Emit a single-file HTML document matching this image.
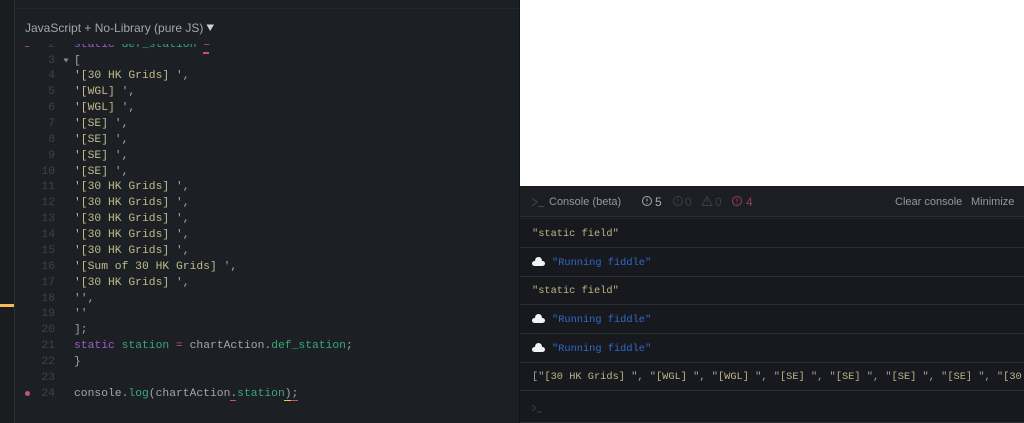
<!DOCTYPE html>
<html><head><meta charset="utf-8"><style>
html,body{margin:0;padding:0;background:#1c1f24}
body{width:1024px;height:423px;position:relative;overflow:hidden;font-family:"Liberation Sans",sans-serif}
div,svg{position:absolute}
.l{left:0;width:55px;height:16px;line-height:16px;text-align:right;color:#3f4348}
.n,.c{font-family:"Liberation Mono",monospace;font-size:11.33px;white-space:pre;filter:blur(.3px)}
.c{left:74px;height:16px;line-height:16px;color:#a3a5a8}
.s{color:#c4bb88}.k{color:#9a5fc4}.g{color:#39a777}.p{color:#c2527a}.w{color:#a3a5a8}
.h{left:520px;width:504px;height:1px;background:#2a2d33}
.m{left:532px;height:16px;line-height:16px;font-family:"Liberation Mono",monospace;font-size:10.33px;white-space:pre;color:#bdb583;filter:blur(.3px)}
.b{color:#2f6ac8}
.t{font-size:11px;color:#95989c;height:14px;line-height:14px;white-space:pre;filter:blur(.25px)}
.cl{left:532px;width:13px;height:5px;background:#f2f3f4;border-radius:3px}
.cl:before{content:"";position:absolute;left:3px;top:-4px;width:7px;height:7px;background:#f2f3f4;border-radius:50%}
</style></head><body>
<div style="left:0;top:0;width:14px;height:423px;background:#1a1c20"></div>
<div style="left:14px;top:0;width:1px;height:423px;background:#2a2d32"></div>
<div style="left:0;top:304px;width:14px;height:3px;background:#f0bd5d"></div>
<div style="left:15px;top:8px;width:505px;height:1px;background:#25282d"></div>
<div class="t" style="left:25px;top:21px;font-size:12px;color:#a4a6a9">JavaScript + No-Library (pure JS)</div>
<svg style="left:206px;top:24px" width="9" height="8"><path d="M0.5 0.5H8L4.2 7Z" fill="#d0d1d3"/></svg>

<div style="left:0;top:44px;width:520px;height:6px;overflow:hidden">
<div class="l n" style="top:-7px">2</div>
<div class="c" style="top:-7px"><span class="k">static</span> <span class="g">def_station</span> <span class="p">=</span></div>
<div style="left:25px;top:2px;width:4px;height:1px;background:#a8456e"></div>
</div>
<div style="left:203px;top:52px;width:6px;height:2px;background:#c2527a"></div>

<svg style="left:63px;top:58px" width="6" height="5"><path d="M0.5 0.5H5.5L3 4.5Z" fill="#8a8d90"/></svg>
<div class="l n" style="top:53px">3</div><div class="c" style="top:53px">[</div>
<div class="l n" style="top:68px">4</div><div class="c s" style="top:68px">'[30 HK Grids] <span class="w">',</span></div>
<div class="l n" style="top:84px">5</div><div class="c s" style="top:84px">'[WGL] <span class="w">',</span></div>
<div class="l n" style="top:100px">6</div><div class="c s" style="top:100px">'[WGL] <span class="w">',</span></div>
<div class="l n" style="top:116px">7</div><div class="c s" style="top:116px">'[SE] <span class="w">',</span></div>
<div class="l n" style="top:132px">8</div><div class="c s" style="top:132px">'[SE] <span class="w">',</span></div>
<div class="l n" style="top:148px">9</div><div class="c s" style="top:148px">'[SE] <span class="w">',</span></div>
<div class="l n" style="top:164px">10</div><div class="c s" style="top:164px">'[SE] <span class="w">',</span></div>
<div class="l n" style="top:179px">11</div><div class="c s" style="top:179px">'[30 HK Grids] <span class="w">',</span></div>
<div class="l n" style="top:195px">12</div><div class="c s" style="top:195px">'[30 HK Grids] <span class="w">',</span></div>
<div class="l n" style="top:211px">13</div><div class="c s" style="top:211px">'[30 HK Grids] <span class="w">',</span></div>
<div class="l n" style="top:227px">14</div><div class="c s" style="top:227px">'[30 HK Grids] <span class="w">',</span></div>
<div class="l n" style="top:243px">15</div><div class="c s" style="top:243px">'[30 HK Grids] <span class="w">',</span></div>
<div class="l n" style="top:259px">16</div><div class="c s" style="top:259px">'[Sum of 30 HK Grids] <span class="w">',</span></div>
<div class="l n" style="top:275px">17</div><div class="c s" style="top:275px">'[30 HK Grids] <span class="w">',</span></div>
<div class="l n" style="top:291px">18</div><div class="c" style="top:291px">'',</div>
<div class="l n" style="top:306px">19</div><div class="c" style="top:306px">''</div>
<div class="l n" style="top:322px">20</div><div class="c" style="top:322px">];</div>
<div class="l n" style="top:338px">21</div><div class="c" style="top:338px"><span class="k">static</span> <span class="g">station</span> <span class="p">=</span> chartAction.<span class="g">def_station</span>;</div>
<div class="l n" style="top:354px">22</div><div class="c" style="top:354px">}</div>
<div class="l n" style="top:370px">23</div>
<div class="l n" style="top:386px">24</div><div class="c" style="top:386px">console.<span class="g">log</span>(chartAction.<span class="g">station</span>);</div>
<div style="left:25px;top:391px;width:5px;height:5px;border-radius:50%;background:#c2527a"></div>
<div style="left:230px;top:400px;width:6px;height:1px;background:#c2527a"></div>
<div style="left:284px;top:400px;width:7px;height:1px;background:#f0bd5d"></div>
<div style="left:291px;top:400px;width:7px;height:1px;background:#c2527a"></div>

<div style="left:520px;top:0;width:504px;height:186px;background:#fff"></div>
<div style="left:520px;top:186px;width:504px;height:237px;background:#17191e"></div>
<div style="left:520px;top:187px;width:504px;height:29px;background:#1b1e23"></div>
<div style="left:519px;top:0;width:1px;height:423px;background:#121418"></div>
<div class="h" style="top:216px"></div>
<div class="h" style="top:218px;background:#22252a"></div>
<div class="h" style="top:247px"></div>
<div class="h" style="top:276px"></div>
<div class="h" style="top:304px"></div>
<div class="h" style="top:333px"></div>
<div class="h" style="top:362px"></div>
<div class="h" style="top:390px"></div>
<div class="h" style="top:422px"></div>

<svg style="left:531px;top:197px" width="14" height="11" fill="none"><path d="M1 1L6 5L1 9" stroke="#44484e"/><path d="M7 9.5H13" stroke="#44484e"/></svg>
<div class="t" style="left:549px;top:195px">Console (beta)</div>
<svg style="left:641px;top:195px" width="110" height="13" fill="none">
<circle cx="6" cy="6" r="4.5" stroke="#a9abad"/><path d="M6 3.5V6.5M6 8V8.8" stroke="#a9abad"/>
<circle cx="37" cy="6" r="4.5" stroke="#3c3f44"/><path d="M37 3.5V6.5M37 8V8.8" stroke="#3c3f44"/>
<path d="M66 1.5L71 10.5H61Z" stroke="#3c3f44"/><path d="M66 4.5V7.5M66 8.5V9.2" stroke="#3c3f44"/>
<circle cx="96" cy="6" r="4.5" stroke="#9c3c58"/><path d="M96 3.5V6.5M96 8V8.8" stroke="#9c3c58"/>
</svg>
<div class="t" style="left:655px;top:195px;color:#a9abad;font-size:12px">5</div>
<div class="t" style="left:685px;top:195px;color:#3c3f44;font-size:12px">0</div>
<div class="t" style="left:715px;top:195px;color:#3c3f44;font-size:12px">0</div>
<div class="t" style="left:746px;top:195px;color:#9c3c58;font-size:12px">4</div>
<div class="t" style="left:895px;top:195px">Clear console</div>
<div class="t" style="left:971px;top:195px">Minimize</div>

<div class="m" style="top:226px">"static field"</div>
<div class="cl" style="top:261px"></div><div class="m b" style="left:552px;top:255px">"Running fiddle"</div>
<div class="m" style="top:283px">"static field"</div>
<div class="cl" style="top:318px"></div><div class="m b" style="left:552px;top:312px">"Running fiddle"</div>
<div class="cl" style="top:347px"></div><div class="m b" style="left:552px;top:341px">"Running fiddle"</div>
<div class="m" style="top:369px;width:492px;overflow:hidden"><span class="w">["</span>[30 HK Grids] <span class="w">", "</span>[WGL] <span class="w">", "</span>[WGL] <span class="w">", "</span>[SE] <span class="w">", "</span>[SE] <span class="w">", "</span>[SE] <span class="w">", "</span>[SE] <span class="w">", "</span>[30 HK Grids] </div>
<svg style="left:531px;top:404px" width="12" height="9" fill="none"><path d="M1 1L5 4L1 7" stroke="#3c3f44"/><path d="M6 8H11" stroke="#3c3f44"/></svg>
</body></html>
